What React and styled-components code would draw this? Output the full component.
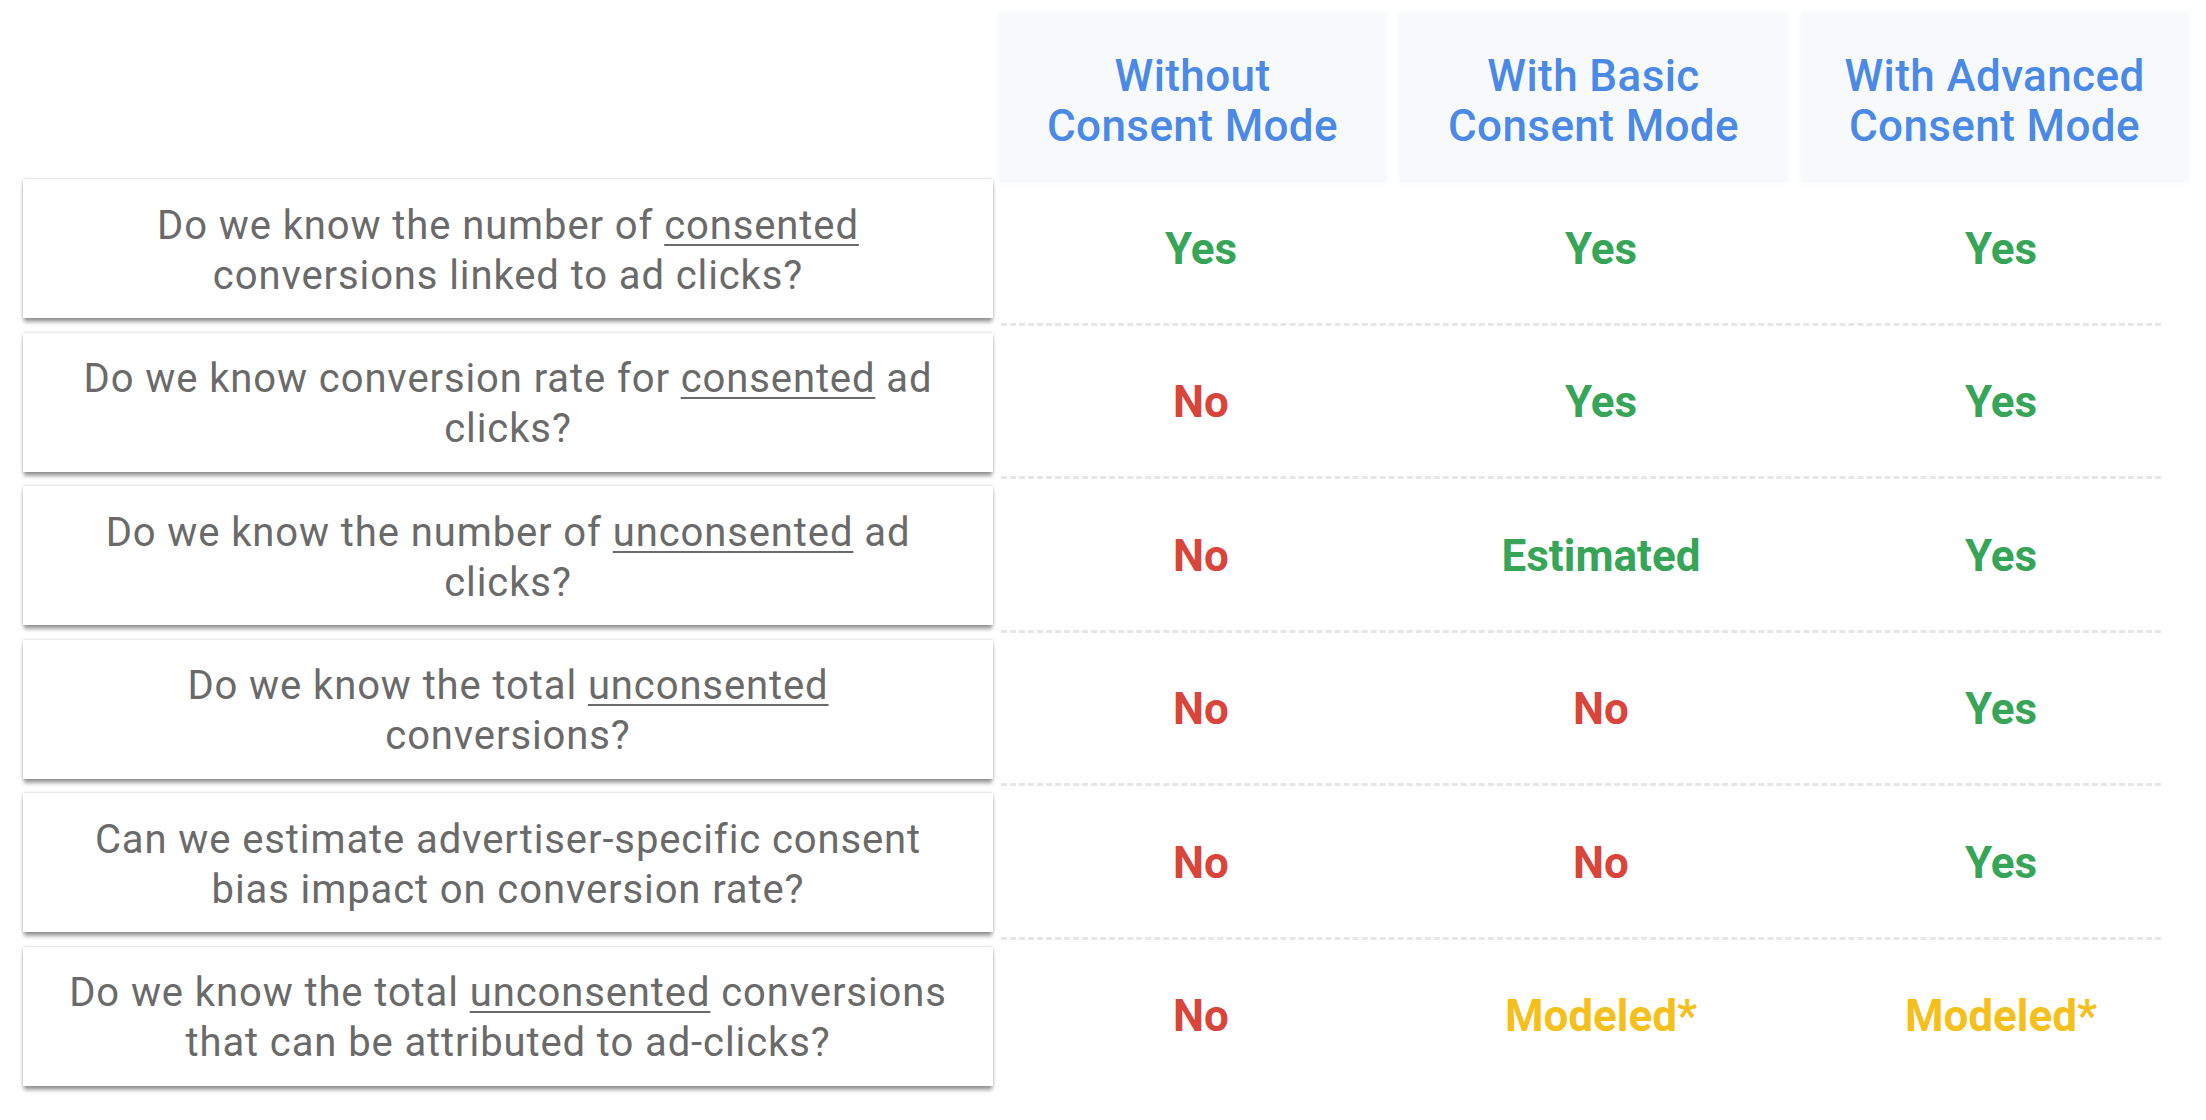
import React from 'react';
import styled, { createGlobalStyle } from 'styled-components';

const GlobalStyle = createGlobalStyle`
  html, body {
    margin: 0;
    padding: 0;
    background: #ffffff;
  }
  body {
    font-family: Roboto, "Noto Sans", "Liberation Sans", sans-serif;
  }
`;

const COLORS = {
  Yes: '#37a557',
  No: '#d9453a',
  Estimated: '#37a557',
  'Modeled*': '#f5c01c',
};

const columns = [
  ['Without', 'Consent Mode'],
  ['With Basic', 'Consent Mode'],
  ['With Advanced', 'Consent Mode'],
];

// each question is split in two lines, a line is a list of [text, underlined]
const rows = [
  {
    question: [
      [['Do we know the number of '], ['consented', true]],
      [['conversions linked to ad clicks?']],
    ],
    values: ['Yes', 'Yes', 'Yes'],
  },
  {
    question: [
      [['Do we know conversion rate for '], ['consented', true], [' ad']],
      [['clicks?']],
    ],
    values: ['No', 'Yes', 'Yes'],
  },
  {
    question: [
      [['Do we know the number of '], ['unconsented', true], [' ad']],
      [['clicks?']],
    ],
    values: ['No', 'Estimated', 'Yes'],
  },
  {
    question: [
      [['Do we know the total '], ['unconsented', true]],
      [['conversions?']],
    ],
    values: ['No', 'No', 'Yes'],
  },
  {
    question: [
      [['Can we estimate advertiser-specific consent']],
      [['bias impact on conversion rate?']],
    ],
    values: ['No', 'No', 'Yes'],
  },
  {
    question: [
      [['Do we know the total '], ['unconsented', true], [' conversions']],
      [['that can be attributed to ad-clicks?']],
    ],
    values: ['No', 'Modeled*', 'Modeled*'],
  },
];

function App() {
  return (
    <>
      <GlobalStyle />
      <Page>
        <Header>
          {columns.map((lines) => (
            <HeaderCell key={lines[0]}>
              {lines[0]}
              <br />
              {lines[1]}
            </HeaderCell>
          ))}
        </Header>
        <Table>
          {rows.map((row, i) => (
            <Row key={i}>
              <Card>
                <Question>
                  {row.question.map((line, j) => (
                    <Line key={j}>
                      {line.map(([text, marked], k) =>
                        marked ? <Marked key={k}>{text}</Marked> : <span key={k}>{text}</span>
                      )}
                    </Line>
                  ))}
                </Question>
              </Card>
              <Values $last={i === rows.length - 1}>
                {row.values.map((value, j) => (
                  <Value key={j} $color={COLORS[value]}>
                    {value}
                  </Value>
                ))}
              </Values>
            </Row>
          ))}
        </Table>
      </Page>
    </>
  );
}

export default App;

const Page = styled.div`
  width: 2206px;
  height: 1120px;
  box-sizing: border-box;
  padding: 13px 0 0 23px;
  overflow: hidden;
`;

const Header = styled.div`
  display: grid;
  grid-template-columns: repeat(3, 387px);
  column-gap: 14px;
  padding-left: 976px;
  height: 166px;
`;

const HeaderCell = styled.div`
  height: 169px;
  display: flex;
  align-items: center;
  justify-content: center;
  text-align: center;
  background: #f8f9fa;
  box-shadow: 0 0 6px 2px #f9fafb;
  color: #4a8ae6;
  font-size: 44px;
  font-weight: 500;
  letter-spacing: 0.4px;
  line-height: 50px;
  padding-top: 6px;
  box-sizing: border-box;
`;

const Table = styled.div`
  display: flex;
  flex-direction: column;
`;

const Row = styled.div`
  display: grid;
  grid-template-columns: 970px 1160px;
  column-gap: 8px;
  align-items: stretch;
`;

const Card = styled.div`
  height: 139px;
  margin-bottom: 14.5px;
  background: #ffffff;
  box-shadow: 0 5px 4px -1px rgba(0, 0, 0, 0.38), 0 0 3px rgba(0, 0, 0, 0.22);
  display: flex;
  align-items: center;
  justify-content: center;
`;

const Question = styled.div`
  text-align: center;
  color: #6a6a6a;
  font-size: 40px;
  font-weight: 400;
  letter-spacing: 0.9px;
  line-height: 50px;
  padding-top: 4px;
`;

const Line = styled.div`
  white-space: nowrap;
`;

const Marked = styled.span`
  text-decoration: underline;
  text-decoration-thickness: 2px;
  text-underline-offset: 5px;
`;

const Values = styled.div`
  display: grid;
  grid-template-columns: 400px 400px 360px;
  align-items: center;
  margin-bottom: 7px;
  padding-bottom: 4px;
  border-bottom: 3px dashed ${({ $last }) => ($last ? 'transparent' : '#e6e6e6')};

  & > :last-child {
    padding-left: 40px;
  }
`;

const Value = styled.div`
  text-align: center;
  color: ${({ $color }) => $color};
  font-size: 44px;
  font-weight: 700;
  line-height: 50px;
`;
